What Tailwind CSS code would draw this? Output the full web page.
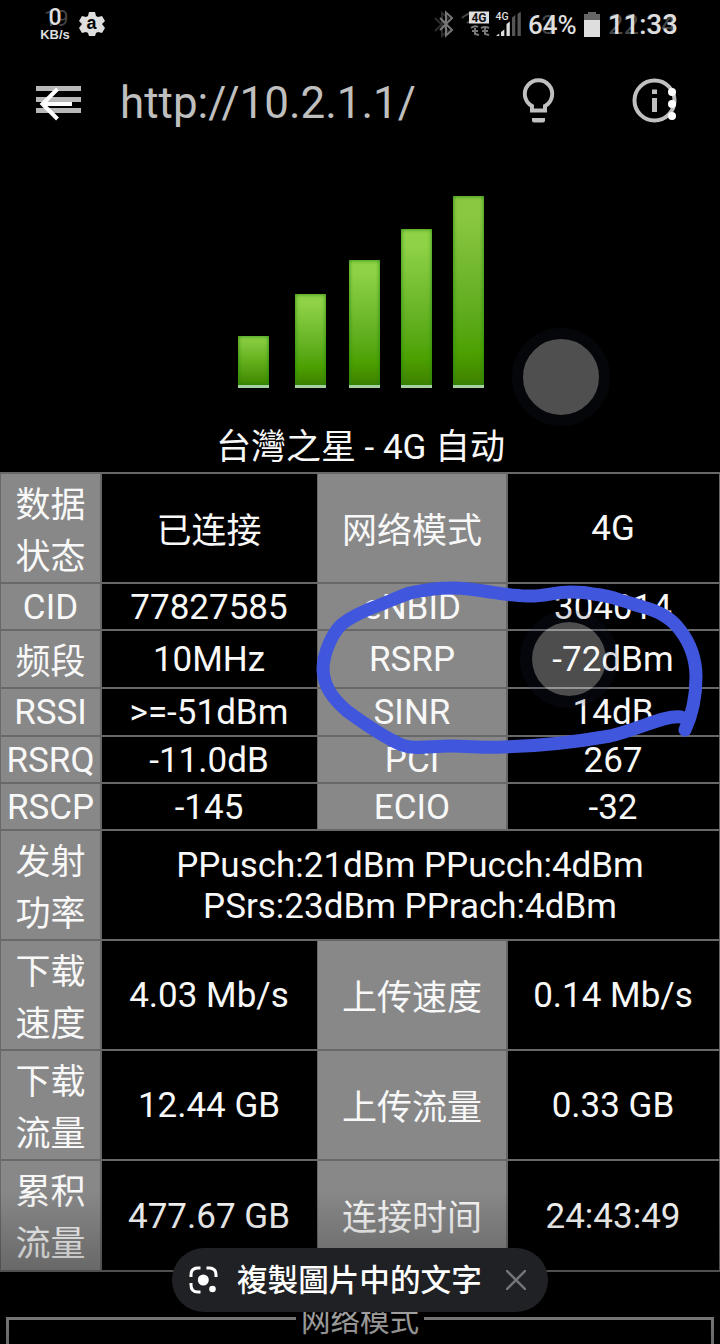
<!DOCTYPE html>
<html lang="zh">
<head>
<meta charset="utf-8">
<title>http://10.2.1.1/</title>
<script src="https://cdn.jsdelivr.net/npm/@tailwindcss/browser@4"></script>
</head>
<body class="bg-black">
<div class="relative flex h-[1344px] w-[720px] flex-col overflow-hidden bg-black font-[Roboto,'Noto_Sans_CJK_SC',sans-serif] text-[#f8f8f8]">

  <!-- status bar -->
  <header class="flex h-12 shrink-0 items-start pl-[39px] text-[#dedede]">
    <div class="relative w-[32px] pt-[8px] text-center">
      <span class="absolute left-[5px] top-[8px] text-[22px] leading-[21px] text-[#444]">19</span>
      <div class="relative text-[23px] font-medium leading-[20px]">0</div>
      <div class="font-['Liberation_Sans',sans-serif] text-[13px] font-bold leading-[13px]">KB/s</div>
    </div>
    <svg class="ml-[8px] mt-[11px] h-[26px] w-[26px]" viewBox="0 0 26 26">
      <path fill="#dedede" d="M10 1h6l1 4 2 1 4-1 3 5-3 3 3 4-3 5-4-1-2 1-1 3h-6l-1-3-2-1-4 1-3-5 3-4-3-3 3-5 4 1 2-1z"/>
      <text x="12.500" y="17.500" text-anchor="middle" font-family="Liberation Sans, sans-serif" font-size="18" font-weight="bold" fill="#000">a</text>
    </svg>
    <svg class="ml-[329px] mt-[10px] h-[28px] w-[90px]" viewBox="434 10 90 28">
      <g fill="none" stroke-width="2">
        <path stroke="#2c2c2c" d="M435 18l13 13-6 5V13l6 5-13 13"/>
        <path stroke="#777" d="M440 18l12 12-6 5.500V12.500l6 5.500-12 12"/>
        <path stroke="#444" d="M462 18q8-7 16-4M467 23q3-3 8-2"/>
        <path stroke="#777" d="M471 28q4-3 7-1M481 28q4-2 8 0M472 31h6M482 31h6M475 28v6l4 1M485 28v6l4 1"/>
      </g>
      <rect x="469" y="11.500" width="20" height="12" fill="#dedede"/>
      <text x="479" y="21.800" text-anchor="middle" font-family="Roboto, sans-serif" font-size="12" font-weight="bold" fill="#111" textLength="15">4G</text>
      <text x="495.500" y="19.500" font-family="Roboto, sans-serif" font-size="10.500" font-weight="500" fill="#dedede">4G</text>
      <path fill="#dedede" d="M496 36l3.200-2.500V36zM501 32l3.300-2.500V36H501zM506.500 27l3.300-2.500V36h-3.300zM506.500 24l3.300-2.500V36h-3.300z"/>
      <path fill="#555" d="M512 17.500l3.300-2.500v21H512zM517.500 14l3.300-2.500V36h-3.300z"/>
    </svg>
    <div class="relative ml-[4px] mt-[9px] h-[30px] w-[49px] text-[26px] leading-[32px]">
      <span class="absolute left-[13px] top-0 text-[#444]">3</span><span class="relative font-medium">64%</span>
    </div>
    <svg class="ml-[7px] mt-[11px] h-[26px] w-4" viewBox="0 0 16 26"><path fill="#666" d="M4 1h8v2h4v8H0V3h4z"/><path fill="#dedede" d="M0 9h16v17H0z"/></svg>
    <div class="relative ml-[8px] mt-[9px] text-[27.500px] leading-[32px]">
      <span class="absolute left-0 top-0 text-[#444]">22:34</span><span class="relative font-medium">11:33</span>
    </div>
  </header>

  <!-- toolbar -->
  <div class="flex h-[112px] shrink-0 items-center">
    <svg class="ml-[32px] h-12 w-14" viewBox="32 80 56 48">
      <path fill="none" stroke="#b8b8b8" stroke-width="5" d="M36 88.500h45M36 99.500h45M36 110.500h45"/>
      <path fill="none" stroke="#fff" stroke-width="4" d="M72 104H44M57.500 89L42.500 104l15 15"/>
    </svg>
    <div class="ml-[32px] w-[394px] pb-[3px] text-[43.900px] leading-[48px] text-[#bfbfbf]">http://10.2.1.1/</div>
    <svg class="h-12 w-12 overflow-visible" viewBox="514 80 48 48">
      <path fill="none" stroke="#c0c0c0" stroke-width="4" d="M532 110.500v-4.500a13.700 13.700 0 1 1 13 0v4.500z"/>
      <path fill="#c0c0c0" d="M532 118h13v2.500q0 2-2 2h-9q-2 0-2-2z"/>
    </svg>
    <svg class="ml-[66px] h-12 w-14 overflow-visible" viewBox="628 80 56 48">
      <circle cx="654.500" cy="100.500" r="20" fill="none" stroke="#c0c0c0" stroke-width="4"/>
      <path fill="#c0c0c0" d="M652 89.500h5v4.500h-5zM652 98h5v14h-5z"/>
      <g fill="#fff"><circle cx="672" cy="92" r="4"/><circle cx="672" cy="104" r="4"/><circle cx="672" cy="116" r="4"/></g>
    </svg>
  </div>

  <!-- signal strength -->
  <div class="flex h-[228px] shrink-0 items-end pl-[238px]">
    <div class="h-[52px] w-[31px] border-b-3 border-[#a5d0a0] bg-linear-to-b from-[#8fd246] via-[#65b01c] to-[#3f8700] shadow-[inset_0_0_4px_#218410]"></div>
    <div class="ml-[26px] h-[94px] w-[31px] border-b-3 border-[#a5d0a0] bg-linear-to-b from-[#8fd246] from-10% via-[#4ca000] via-80% to-[#3f8000] shadow-[inset_0_0_4px_#218410]"></div>
    <div class="ml-[23px] h-[128px] w-[31px] border-b-3 border-[#a5d0a0] bg-linear-to-b from-[#8fd246] from-10% via-[#4ca000] via-82% to-[#3f8000] shadow-[inset_0_0_4px_#218410]"></div>
    <div class="ml-[21px] h-[159px] w-[31px] border-b-3 border-[#a5d0a0] bg-linear-to-b from-[#8fd246] from-10% via-[#4ca000] via-83% to-[#3f8000] shadow-[inset_0_0_4px_#218410]"></div>
    <div class="ml-[21px] h-[192px] w-[31px] border-b-3 border-[#a5d0a0] bg-linear-to-b from-[#8bc842] from-10% via-[#4ca000] via-83% to-[#3f8000] shadow-[inset_0_0_4px_#218410]"></div>
  </div>
  <h1 class="h-[84px] shrink-0 whitespace-nowrap pl-[1px] pt-[33px] text-center text-[35px] leading-[53px]">台灣之星 - 4G 自动</h1>

  <!-- connection details -->
  <main class="grid h-[800px] shrink-0 grid-cols-[99px_215px_188px_211px] grid-rows-[108px_45px_56px_46px_45px_45px_108px_108px_108px_109px] gap-x-[1.500px] gap-y-[2px] bg-[#686868] py-[2px] pl-[1px] text-center text-[35px] leading-[41px] *:flex *:items-center *:justify-center *:whitespace-nowrap *:bg-black *:pt-px *:odd:bg-[#888]">
    <div><p class="pt-[7px] leading-[52px]">数据<br>状态</p></div><div><p class="pt-1.5">已连接</p></div><div><p class="pt-1.5">网络模式</p></div><div>4G</div>
    <div>CID</div><div>77827585</div><div>eNBID</div><div>304014</div>
    <div><p class="pt-1.5">频段</p></div><div>10MHz</div><div>RSRP</div><div>-72dBm</div>
    <div>RSSI</div><div>&gt;=-51dBm</div><div>SINR</div><div>14dB</div>
    <div>RSRQ</div><div>-11.0dB</div><div>PCI</div><div>267</div>
    <div>RSCP</div><div>-145</div><div>ECIO</div><div>-32</div>
    <div><p class="pt-[7px] leading-[52px]">发射<br>功率</p></div><div class="col-span-3">PPusch:21dBm PPucch:4dBm<br>PSrs:23dBm PPrach:4dBm</div>
    <div><p class="pt-[7px] leading-[52px]">下载<br>速度</p></div><div>4.03 Mb/s</div><div><p class="pt-1.5">上传速度</p></div><div>0.14 Mb/s</div>
    <div><p class="pt-[7px] leading-[52px]">下载<br>流量</p></div><div>12.44 GB</div><div><p class="pt-1.5">上传流量</p></div><div>0.33 GB</div>
    <div><p class="pt-[6px] leading-[52px]">累积<br>流量</p></div><div>477.67 GB</div><div><p class="pt-1">连接时间</p></div><div>24:43:49</div>
  </main>

  <fieldset class="mx-[6px] mt-[28px] h-[80px] shrink-0 border-[3px] border-[#bbb] px-2">
    <legend class="mx-auto px-[5px] text-[29.500px] leading-[37px]"><span class="relative top-[3px]">网络模式</span></legend>
  </fieldset>

  <!-- touch indicators -->
  <div class="absolute left-[512px] top-[328px] h-[98px] w-[98px] rounded-full border-[11.500px] border-[#05060a] bg-[#4f4f4f]"></div>
  <div class="absolute left-[520px] top-[610px] h-[98px] w-[98px] rounded-full border-[12px] border-[#1c2850]/15 bg-white/30 bg-clip-padding"></div>

  <!-- hand-drawn loop -->
  <svg class="absolute left-0 top-0 h-[1344px] w-[720px]" viewBox="0 0 720 1344">
    <path fill="none" stroke="#4057dd" stroke-width="13" stroke-linecap="round" stroke-linejoin="round" d="M685 730C692 715 696 700 696 677C696 659 690 643 680 630C675 623 670 619 663 615C657 611 650 609 643 607C635 605 628 602 620 600C612 597 602 595 593 594C585 592 578 592 570 592C555 592 542 597 527 596C515 596 503 594 490 592C478 590 466 588 453 588C438 588 423 590 410 593C398 597 388 602 377 606C364 611 350 617 341 625C331 635 323 655 323 670C324 687 333 699 347 711C362 722 385 738 402 745C415 750 430 746 450 746C470 746 485 748 503 747C540 746 570 743 610 736C640 729 664 715 681 717"/>
  </svg>

  <div class="absolute left-0 top-[1190px] h-[154px] w-[720px] bg-linear-to-b from-black/0 to-black/45"></div>

  <!-- copy text chip -->
  <div class="absolute left-[172px] top-[1248px] flex h-16 w-[376px] items-center rounded-full bg-[#202125] text-white">
    <svg class="ml-[16px] h-8 w-8" viewBox="188 1264 32 32">
      <path fill="none" stroke="#fff" stroke-width="3" d="M191 1277v-2q0-7 7-7h2.500M206.500 1268h2.500q7 0 7 7v2M191 1283v2q0 7 7 7h2.500"/>
      <circle cx="203.300" cy="1280" r="5.500" fill="#fff"/><circle cx="212.500" cy="1289" r="3.300" fill="#fff"/>
    </svg>
    <span class="ml-[17px] -mt-[4px] whitespace-nowrap font-['Noto_Sans_CJK_TC',sans-serif] text-[30.600px] font-medium leading-[40px]">複製圖片中的文字</span>
    <svg class="ml-[24px] h-5 w-5" viewBox="0 0 20 20"><path fill="none" stroke="#72757a" stroke-width="2.500" d="M0 0l20 20M20 0L0 20"/></svg>
  </div>
</div>
</body>
</html>
